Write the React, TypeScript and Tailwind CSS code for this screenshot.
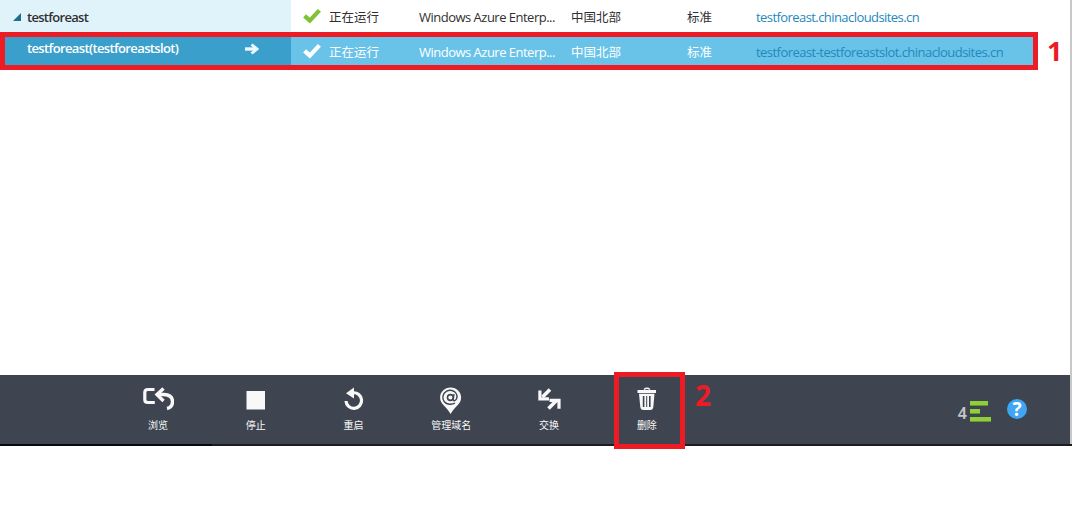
import type { ReactNode } from "react";

const CJK = "font-['Noto_Sans_CJK_SC',sans-serif]";
const LATIN = "font-['Open_Sans','Noto_Sans_CJK_SC',sans-serif]";

function Check({ className }: { className: string }) {
  return (
    <svg width="18" height="16" viewBox="0 0 18 16" className={className}>
      <path d="M1.600 7.800 6.800 12.600 16.400 2.400" fill="none" stroke="currentColor" strokeWidth="4.300" />
    </svg>
  );
}

interface SiteCellsProps {
  url: string;
  urlClass: string;
  checkClass: string;
}

function SiteCells({ url, urlClass, checkClass }: SiteCellsProps) {
  return (
    <>
      <Check className={`ml-3 -mt-[2px] shrink-0 ${checkClass}`} />
      <span className={`ml-2 w-[90px] shrink-0 text-[12.5px] ${CJK}`}>正在运行</span>
      <span className="w-[152px] shrink-0 tracking-[-0.51px]">Windows Azure Enterp...</span>
      <span className={`w-[116px] shrink-0 text-[12.5px] ${CJK}`}>中国北部</span>
      <span className={`w-[69px] shrink-0 text-[12.5px] ${CJK}`}>标准</span>
      <span className={urlClass}>{url}</span>
    </>
  );
}

function Tool({ label, children }: { label: string; children: ReactNode }) {
  return (
    <button className="flex w-[97.8px] flex-col items-center pt-[10px] text-[#f8f8f9]">
      <svg width="32" height="30" viewBox="0 0 32 30" fill="none" stroke="currentColor">
        {children}
      </svg>
      <span className={`mt-[3px] text-[10px] leading-[14px] ${CJK}`}>{label}</span>
    </button>
  );
}

export default function App() {
  return (
    <div className={`relative flex h-[531px] w-[1072px] flex-col overflow-hidden bg-white text-[13px] whitespace-nowrap text-[#303030] ${LATIN}`}>
      <div className="flex h-[375px] flex-col border-r-2 border-[#c8c8c8]">
        <div className="flex h-8 items-center leading-[18px]">
          <div className="flex h-full w-[291px] shrink-0 items-center bg-[#e0f3fb] pl-[13px]">
            <svg width="8" height="8" viewBox="0 0 8 8" className="mt-[1px]">
              <path d="M8 0v8H0z" fill="#206d91" />
            </svg>
            <span className="ml-[6px] mt-[2px] font-semibold tracking-[-0.7px]">testforeast</span>
          </div>
          <div className="flex items-center pt-[2px]">
            <SiteCells url="testforeast.chinacloudsites.cn" urlClass="text-[#2488bd] tracking-[-0.57px]" checkClass="text-[#7fc137]" />
          </div>
        </div>
        <div className="flex h-[38px] w-[1038px] items-center border-5 border-[#ed1c24] bg-[#69c3e9] leading-[18px] text-white">
          <div className="flex h-full w-[286px] shrink-0 items-start bg-[#3b9fcb] pl-[22px] pt-[2px]">
            <span className="w-[218px] font-semibold tracking-[-0.63px]">testforeast(testforeastslot)</span>
            <svg width="14" height="12" viewBox="0 0 14 12" fill="none" stroke="#edf8ff" className="mt-1">
              <path d="M0 6h12" strokeWidth="3.400" />
              <path d="M6.500 1.500 12 6l-5.500 4.500" strokeWidth="2.800" />
            </svg>
          </div>
          <div className="flex items-center pt-[2px]">
            <SiteCells url="testforeast-testforeastslot.chinacloudsites.cn" urlClass="w-[247px] shrink-0 text-[#2488bd] tracking-[-0.54px]" checkClass="text-white" />
          </div>
          <span className="ml-[44px] font-['Noto_Sans',sans-serif] text-[27px] font-bold text-[#ed1c24]">1</span>
        </div>
      </div>

      <div className="flex">
        <div className="flex h-[69px] w-[1070px] bg-[#3e4550] pl-[109px]">
          <Tool label="浏览">
            <path d="M12.500 4.500H6Q2.800 4.500 2.800 7.500v7q0 3 3 3h7" strokeWidth="3.200" />
            <path d="M21.500 3.500l-6.500 6 6.500 6.500" strokeWidth="3.400" />
            <path d="M15 9.500h7q8.500.5 8.500 7 0 6-5.500 7" strokeWidth="3.500" />
          </Tool>
          <Tool label="停止">
            <path d="M6.500 6h18.500v18.500H6.500z" fill="currentColor" stroke="none" />
          </Tool>
          <Tool label="重启">
            <path d="M16 7.800A7.800 7.800 0 1 1 9 16" strokeWidth="3.200" />
            <path d="M17 2.500v11L9 8.200z" fill="currentColor" stroke="none" />
          </Tool>
          <Tool label="管理域名">
            <path d="M15.600 2.500c6 0 10.500 4.500 10.500 10 0 7-6.500 9-10.500 16.500C11.600 21.500 5.100 19.500 5.100 12.500c0-5.500 4.500-10 10.500-10z" fill="currentColor" stroke="none" />
            <circle cx="15.400" cy="12.500" r="2.900" stroke="#3e4550" strokeWidth="1.600" />
            <path d="M19 9l-.7 5q-.2 2 1.200 1.700c2.500-.6 3.200-4.700 1.700-7.200C19.500 5.300 15 4.300 11.300 6.300s-4.500 7.400-2 10.400c2.500 3 7.700 3.200 10.700 1.300" stroke="#3e4550" strokeWidth="1.400" />
          </Tool>
          <Tool label="交换">
            <path d="M17 4.500 9.500 12M15.500 23.500l7.500-7.500" strokeWidth="3.600" />
            <path d="M6.900 5.500v8.300H16M16.500 15.300h9.500v8.500" strokeWidth="3.200" />
          </Tool>
          <Tool label="删除">
            <path d="M13 4.500q3-2.500 6 0" strokeWidth="1.500" />
            <path d="M6.500 5h18.500v3H6.500z" fill="currentColor" stroke="none" />
            <path d="M8 8.800h15.500l-1.200 13.200q-.3 3-3 3h-7q-2.700 0-3-3z" fill="currentColor" stroke="none" />
            <path d="M12.600 11v11M18.800 11v11" stroke="#3e4550" strokeWidth="1.600" />
            <path d="M15.700 11v11" stroke="#3e4550" strokeWidth="1" />
          </Tool>
          <div className="ml-auto mr-[43px] flex pt-6">
            <span className="mt-[4px] mr-[3px] font-['Noto_Sans',sans-serif] text-[16px] leading-[20px] font-semibold text-[#c4c6c9]">4</span>
            <svg width="21" height="22" viewBox="0 0 21 22" className="mt-[2px]">
              <path d="M0 0h18v5H0zM0 8h10v5H0zM0 16h21v5H0z" fill="#91cf3a" />
              <path d="M0 4h18v1H0zM0 12h10v1H0zM0 20h21v1H0z" fill="#69972f" />
            </svg>
            <span className="ml-4 flex size-5 items-center justify-center rounded-full bg-[#3ea6f4] font-['Noto_Sans',sans-serif] text-[19px] leading-[20px] font-bold text-white">?</span>
          </div>
        </div>
        <div className="w-[2px] bg-[#c8c8c8]" />
      </div>
      <div className="flex h-[2px] bg-[#1d1d1f]">
        <div className="w-[212px] bg-[#030b12]" />
      </div>

      <div className="absolute left-[614px] top-[372px] h-[77px] w-[71px] border-5 border-[#ed1c24]" />
      <span className="absolute left-[695px] top-[376px] font-['Noto_Sans',sans-serif] text-[28px] leading-[38px] font-bold text-[#ed1c24]">2</span>
    </div>
  );
}
